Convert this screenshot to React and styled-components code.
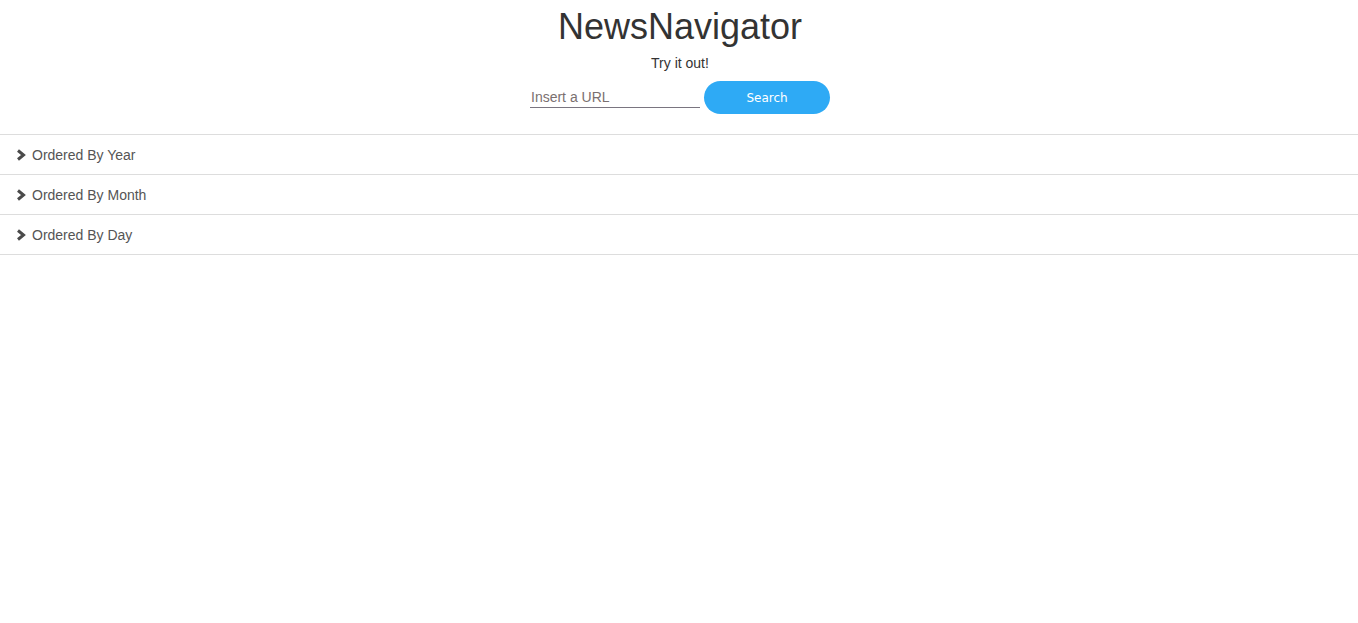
import React from "react";
import styled, { createGlobalStyle } from "styled-components";

const Global = createGlobalStyle`
  html, body { margin: 0; padding: 0; background: #fff; }
  body { font-family: "Liberation Sans", Arial, sans-serif; }
`;

const Page = styled.div`
  display: flex;
  flex-direction: column;
`;

const Header = styled.header`
  display: flex;
  flex-direction: column;
  align-items: center;
  padding-left: 2px;
`;

const Title = styled.h1`
  margin: 6px 0 0;
  font-size: 36px;
  font-weight: normal;
  line-height: normal;
  color: #333;
`;

const Subtitle = styled.p`
  margin: 7px 0 0;
  font-size: 14px;
  line-height: normal;
  color: #333;
`;

const Form = styled.form`
  display: flex;
  align-items: center;
  gap: 4px;
  margin-top: 10px;
  height: 33px;
`;

const UrlInput = styled.input`
  box-sizing: border-box;
  width: 170px;
  height: 21px;
  padding: 0 1px;
  border: none;
  border-bottom: 1px solid #7a7580;
  outline: none;
  font-family: "Liberation Sans", Arial, sans-serif;
  font-size: 14px;
  color: #333;
  background: transparent;
  &::placeholder { color: #7a7070; }
`;

const SearchButton = styled.button`
  width: 126px;
  height: 33px;
  border: none;
  border-radius: 17px;
  background: #2eaaf5;
  color: #fff;
  font-family: "DejaVu Sans", sans-serif;
  font-size: 12px;
  cursor: pointer;
`;

const Accordion = styled.div`
  margin-top: 20px;
  border-bottom: 1px solid #ddd;
`;

const Row = styled.div`
  display: flex;
  align-items: center;
  gap: 6px;
  height: 39px;
  padding-left: 16px;
  border-top: 1px solid #ddd;
  font-size: 14px;
  color: #555;
  cursor: pointer;
`;

const Chevron = () => (
  <svg width="10" height="12" viewBox="0 0 10 12">
    <path d="M2 1.5 L7.5 6 L2 10.5" fill="none" stroke="#4a4a4a" strokeWidth="3" strokeLinejoin="miter" />
  </svg>
);

const sections = ["Ordered By Year", "Ordered By Month", "Ordered By Day"];

export default function App() {
  return (
    <Page>
      <Global />
      <Header>
        <Title>NewsNavigator</Title>
        <Subtitle>Try it out!</Subtitle>
        <Form onSubmit={(e) => e.preventDefault()}>
          <UrlInput placeholder="Insert a URL" />
          <SearchButton type="submit">Search</SearchButton>
        </Form>
      </Header>
      <Accordion>
        {sections.map((s) => (
          <Row key={s}>
            <Chevron />
            <span>{s}</span>
          </Row>
        ))}
      </Accordion>
    </Page>
  );
}
